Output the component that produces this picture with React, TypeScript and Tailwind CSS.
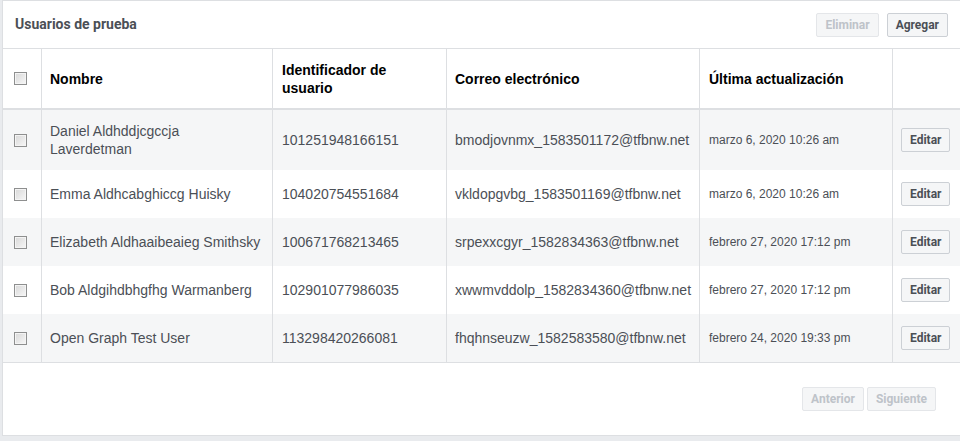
import React from "react";

const users = [
  {
    name: "Daniel Aldhddjcgccja Laverdetman",
    id: "101251948166151",
    email: "bmodjovnmx_1583501172@tfbnw.net",
    date: "marzo 6, 2020 10:26 am",
  },
  {
    name: "Emma Aldhcabghiccg Huisky",
    id: "104020754551684",
    email: "vkldopgvbg_1583501169@tfbnw.net",
    date: "marzo 6, 2020 10:26 am",
  },
  {
    name: "Elizabeth Aldhaaibeaieg Smithsky",
    id: "100671768213465",
    email: "srpexxcgyr_1582834363@tfbnw.net",
    date: "febrero 27, 2020 17:12 pm",
  },
  {
    name: "Bob Aldgihdbhgfhg Warmanberg",
    id: "102901077986035",
    email: "xwwmvddolp_1582834360@tfbnw.net",
    date: "febrero 27, 2020 17:12 pm",
  },
  {
    name: "Open Graph Test User",
    id: "113298420266081",
    email: "fhqhnseuzw_1582583580@tfbnw.net",
    date: "febrero 24, 2020 19:33 pm",
  },
];

const Checkbox = () => (
  <span className="block w-[13px] h-[13px] border border-[#8e8f8f] bg-linear-to-br from-[#d8d8d8] to-[#f7f7f7] shadow-[inset_0_0_0_1px_#f4f4f4]" />
);

const Btn = ({ label, disabled }: { label: string; disabled?: boolean }) => (
  <button
    className={
      "h-[24px] px-[8px] rounded-[2px] border bg-[#f5f6f7] text-[12px] font-bold leading-none font-['Roboto',sans-serif] " +
      (disabled
        ? "border-[#e4e6e9] text-[#bec3c9]"
        : "border-[#ccd0d5] text-[#4b4f56]")
    }
  >
    {label}
  </button>
);

export default function App() {
  return (
    <div className="w-[960px] h-[441px] overflow-hidden bg-[#e9ebee] font-['Liberation_Sans',Arial,sans-serif]">
      <div className="ml-[2px] w-[962px] h-[436px] bg-white border border-[#dddfe2] flex flex-col">
        {/* titulo */}
        <div className="h-[47px] flex items-center justify-between pl-[12px] pr-[15px]">
          <h2 className="text-[14px] font-bold text-[#4b4f56] font-['Roboto',sans-serif]">
            Usuarios de prueba
          </h2>
          <div className="flex gap-[8px]">
            <Btn label="Eliminar" disabled />
            <Btn label="Agregar" />
          </div>
        </div>

        {/* tabla */}
        <div className="border-t border-[#dddfe2]">
          <div className="flex h-[61px] border-b-2 border-[#dddfe2] text-[14px] font-bold text-black leading-[18px]">
            <div className="w-[39px] flex items-center pl-[11px] border-r border-[#dddfe2]">
              <Checkbox />
            </div>
            <div className="w-[231px] flex items-center pl-[8px] border-r border-[#dddfe2]">Nombre</div>
            <div className="w-[174px] flex items-center pl-[9px] pr-[20px] border-r border-[#dddfe2]">
              Identificador de usuario
            </div>
            <div className="w-[253px] flex items-center pl-[8px] border-r border-[#dddfe2]">Correo electrónico</div>
            <div className="w-[193px] flex items-center pl-[9px] border-r border-[#dddfe2]">Última actualización</div>
            <div className="flex-1" />
          </div>

          {users.map((u, i) => (
            <div
              key={u.id}
              className={
                "flex text-[14px] text-[#4b4f56] leading-[18px] " +
                (i === 0 ? "h-[60px] " : "h-[48px] ") +
                (i % 2 === 0 ? "bg-[#f5f6f7]" : "bg-white")
              }
            >
              <div className="w-[39px] flex items-center pl-[11px] border-r border-[#dddfe2]">
                <Checkbox />
              </div>
              <div className="w-[231px] flex items-center pl-[8px] pr-[8px] border-r border-[#dddfe2]">{u.name}</div>
              <div className="w-[174px] flex items-center pl-[9px] border-r border-[#dddfe2]">{u.id}</div>
              <div className="w-[253px] flex items-center pl-[8px] border-r border-[#dddfe2]">{u.email}</div>
              <div className="w-[193px] flex items-center pl-[9px] text-[12px] border-r border-[#dddfe2]">{u.date}</div>
              <div className="flex-1 flex items-center pl-[8px]">
                <Btn label="Editar" />
              </div>
            </div>
          ))}
        </div>

        {/* paginacion */}
        <div className="flex-1 border-t border-[#dddfe2] flex justify-end items-start pt-[24px] pr-[27px] gap-[3px]">
          <Btn label="Anterior" disabled />
          <Btn label="Siguiente" disabled />
        </div>
      </div>
    </div>
  );
}
